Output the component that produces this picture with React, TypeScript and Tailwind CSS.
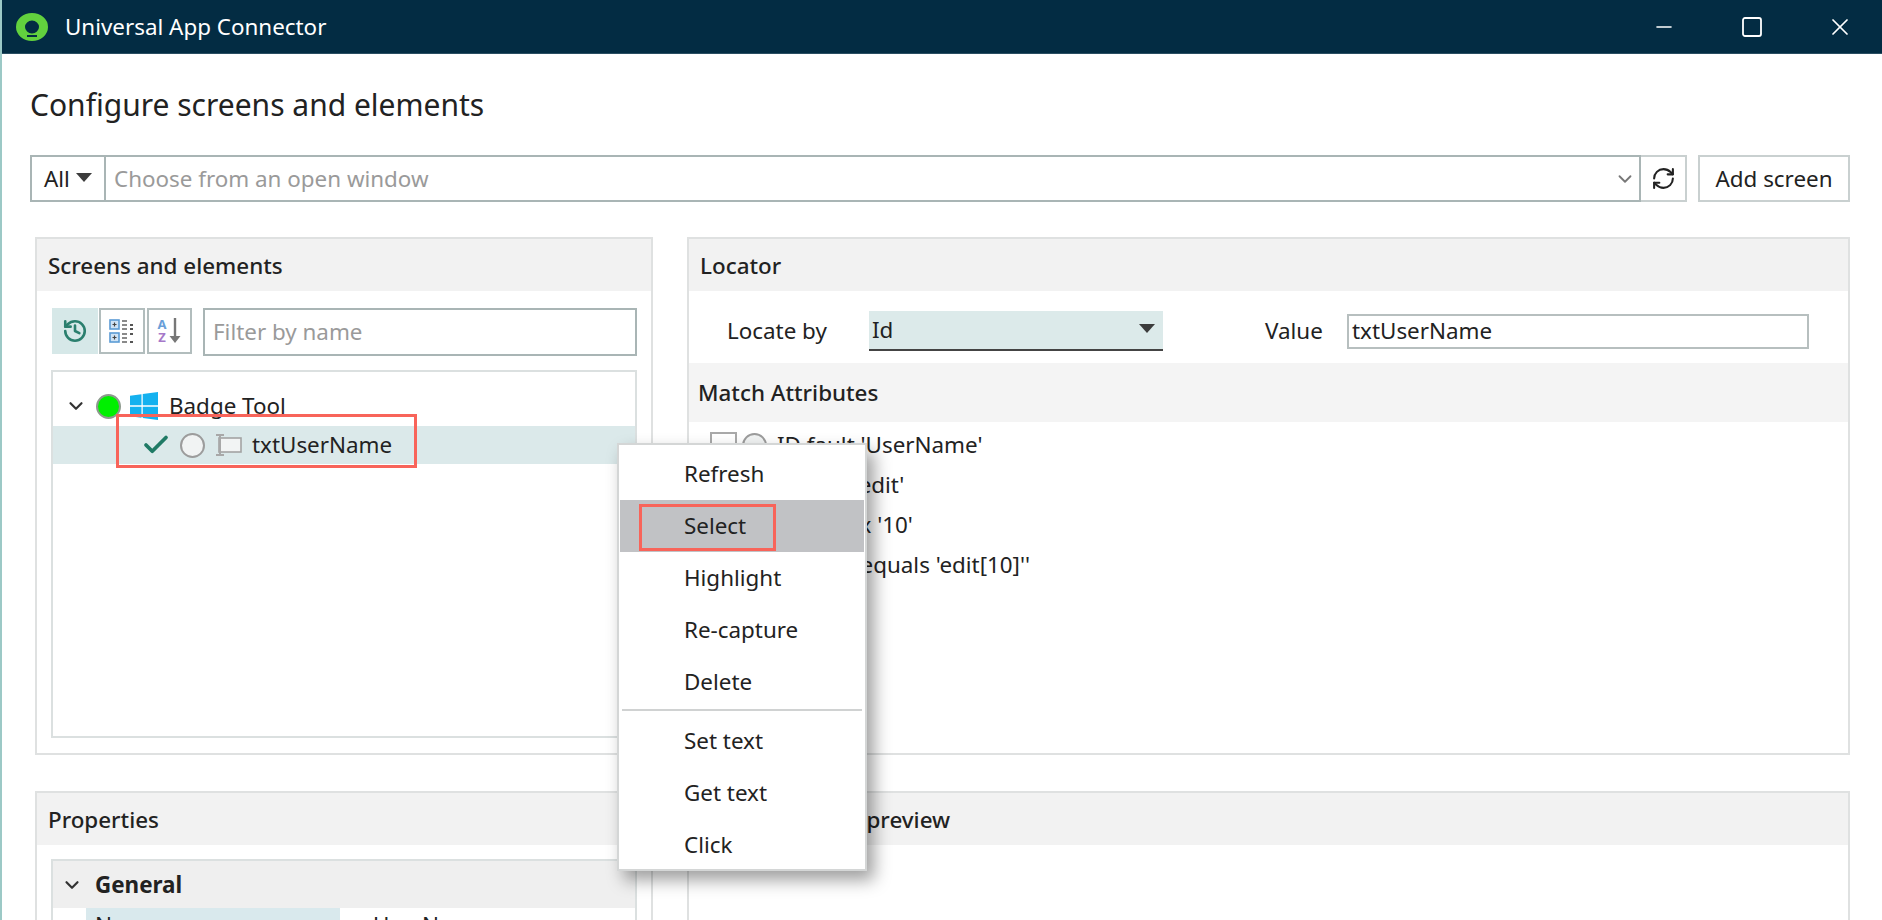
import React from "react";
import { ChevronDown, Check, History, RefreshCw, Minus, X, Square } from "lucide-react";
import { FaWindows } from "react-icons/fa";

function Logo() {
  return (
    <svg width="32" height="28" viewBox="0 0 32 28">
      <path
        fillRule="evenodd"
        d="M0 14a16 14 0 1 0 32 0a16 14 0 1 0 -32 0zM9 14a7 6.5 0 1 0 14 0a7 6.5 0 1 0 -14 0z"
        fill="#62d13e"
      />
      <rect x="11" y="22" width="10" height="2" fill="#032c43" />
    </svg>
  );
}

function ExpandIcon() {
  return (
    <svg width="26" height="26" viewBox="0 0 26 26">
      <rect x="1" y="2" width="9" height="9" fill="#cfe3f5" stroke="#5b9bd5" strokeWidth="1.6" />
      <rect x="1" y="15" width="9" height="9" fill="#cfe3f5" stroke="#5b9bd5" strokeWidth="1.6" />
      <path d="M3.5 6.5h4M5.5 4.5v4M3.5 19.5h4M5.5 17.5v4" stroke="#444" strokeWidth="1.2" />
      <path d="M13 3h5M13 7h5M13 11h5M13 16h5M13 20h5M13 24h5" stroke="#8a8a8a" strokeWidth="2.2" />
      <path d="M21 7h3M21 11h3M21 16h3M21 24h3" stroke="#555" strokeWidth="2.2" />
    </svg>
  );
}

function SortIcon() {
  return (
    <span className="flex items-center gap-[1px]">
      <span className="flex flex-col items-center text-[13px] leading-[13px] font-bold">
        <span className="text-[#6a9fd8]">A</span>
        <span className="text-[#a678c9]">Z</span>
      </span>
      <svg width="14" height="28" viewBox="0 0 14 28">
        <path d="M7 1v20" stroke="#777" strokeWidth="2.4" />
        <path d="M1.5 19h11L7 26z" fill="#777" />
      </svg>
    </span>
  );
}

function ElementIcon() {
  return (
    <svg width="28" height="24" viewBox="0 0 28 24">
      <rect x="5" y="5" width="22" height="14" fill="#f2f4f4" stroke="#a3a3a3" strokeWidth="1.6" />
      <path d="M6 2v20M2 2h8M2 22h8" stroke="#a8a8a8" strokeWidth="2" />
    </svg>
  );
}

function Caret({ className }: { className: string }) {
  return (
    <svg className={className} width="16" height="9" viewBox="0 0 16 9">
      <path d="M0 0h16L8 9z" fill="#3c3c3c" />
    </svg>
  );
}

function Radio() {
  return <span className="block h-[25px] w-[25px] shrink-0 rounded-full border-2 border-[#9c9c9c] bg-[#f1f3f3]" />;
}

function Panel({ title, className, children }: { title: string; className?: string; children?: React.ReactNode }) {
  return (
    <section className={`flex flex-col border-2 border-[#dfe1e1] ${className ?? ""}`}>
      <header className="flex h-[52px] shrink-0 items-center bg-[#f2f2f2] pl-[11px] pt-[2px] font-medium">{title}</header>
      {children}
    </section>
  );
}

function AttrRow({ text }: { text: string }) {
  return (
    <div className="flex h-[40px] items-center">
      <span className="h-[26px] w-[27px] shrink-0 border-2 border-[#a9a9a9]" />
      <span className="ml-[5px]"><Radio /></span>
      <span className="ml-[10px] whitespace-nowrap">{text}</span>
    </div>
  );
}

const menuTop = ["Refresh", "Select", "Highlight", "Re-capture", "Delete"];
const menuBottom = ["Set text", "Get text", "Click"];

function MenuItem({ label }: { label: string }) {
  const active = label === "Select";
  return (
    <div className={`flex h-[52px] items-center pl-[64px] ${active ? "bg-[#c1c2c5]" : ""}`}>
      <span>{label}</span>
    </div>
  );
}

export default function App() {
  return (
    <div className="relative h-[920px] w-[1882px] overflow-hidden border-l-2 border-[#9cc9c6] bg-white text-[22.4px] leading-[28px] text-[#222] font-['Noto_Sans',sans-serif]">
      <div className="-ml-[2px] flex h-[54px] items-center border-b border-[#2a4e62] bg-[#032c43] pl-[16px] text-white">
        <Logo />
        <span className="ml-[17px] whitespace-nowrap">Universal App Connector</span>
        <div className="ml-auto flex items-center gap-[68px] pr-[32px]">
          <Minus size={24} strokeWidth={1.6} className="-mx-[2px]" />
          <Square size={24} strokeWidth={1.8} className="-mx-[2px]" />
          <X size={28} strokeWidth={1.5} className="-mx-[4px]" />
        </div>
      </div>

      <div className="pl-[28px] pr-[32px]">
        <h1 className="mt-[31px] h-[40px] text-[30px] leading-[40px] font-normal">Configure screens and elements</h1>

        <div className="mt-[30px] flex h-[47px]">
          <div className="flex w-[76px] items-center border-2 border-[#a9b5b5] pl-[12px]">
            <span>All</span>
            <Caret className="ml-[6px] mb-[2px]" />
          </div>
          <div className="-ml-[2px] flex flex-1 items-center border-2 border-[#a9b5b5] pl-[8px] pr-[3px] text-[#9a9a9a]">
            <span>Choose from an open window</span>
            <ChevronDown size={22} strokeWidth={2} className="ml-auto text-[#777]" />
          </div>
          <div className="flex w-[46px] items-center justify-center border-2 border-l-0 border-[#c9d0d0]">
            <RefreshCw size={25} strokeWidth={2} className="text-[#222]" />
          </div>
          <div className="ml-[11px] flex w-[152px] items-center justify-center border-2 border-[#c9d0d0]">Add screen</div>
        </div>

        <div className="mt-[35px] ml-[5px] grid grid-cols-[618px_1163px] grid-rows-[518px_200px] gap-x-[34px] gap-y-[36px]">
          <Panel title="Screens and elements">
            <div className="mt-[17px] flex pl-[15px] pr-[14px]">
              <div className="flex h-[46px] w-[46px] items-center justify-center bg-[#d6e8e8]">
                <History size={26} strokeWidth={2.4} className="text-[#2b7f6e]" />
              </div>
              <div className="ml-[1px] flex h-[46px] w-[46px] items-center justify-center border-2 border-[#b2bdbd]">
                <ExpandIcon />
              </div>
              <div className="ml-[2px] flex h-[46px] w-[45px] items-center justify-center border-2 border-[#b2bdbd]">
                <SortIcon />
              </div>
              <div className="ml-[11px] flex h-[48px] flex-1 items-center border-2 border-[#a9b5b5] pl-[8px] text-[#9a9a9a]">Filter by name</div>
            </div>
            <div className="mx-[14px] mt-[14px] h-[368px] border-2 border-[#dbe0e0] pt-[14px]">
              <div className="flex h-[40px] items-center pl-[12px]">
                <ChevronDown size={22} strokeWidth={2.4} className="text-[#333]" />
                <span className="ml-[9px] block h-[25px] w-[25px] shrink-0 rounded-full border-2 border-[#8e9a8e] bg-[#00f000]" />
                <FaWindows size={32} className="ml-[7px] text-[#14b1ef]" />
                <span className="ml-[9px]">Badge Tool</span>
              </div>
              <div className="flex h-[38px] items-center bg-[#dbe9ea] pl-[88px]">
                <Check size={30} strokeWidth={3} className="text-[#1f7a65]" />
                <span className="ml-[9px]"><Radio /></span>
                <span className="ml-[9px]"><ElementIcon /></span>
                <span className="ml-[10px]">txtUserName</span>
              </div>
            </div>
          </Panel>

          <Panel title="Locator">
            <div className="flex h-[72px] shrink-0 items-center pl-[38px] pt-[8px]">
              <span className="w-[142px]">Locate by</span>
              <div className="relative flex h-[40px] w-[294px] items-center border-b-2 border-[#444] bg-[#dceaea] pl-[3px]">
                <span>Id</span>
                <Caret className="ml-auto mr-[8px] mb-[4px]" />
              </div>
              <span className="ml-[102px] w-[82px]">Value</span>
              <div className="flex h-[35px] w-[462px] items-center border-2 border-[#b7bfbf] pl-[3px]">txtUserName</div>
            </div>
            <div className="flex h-[59px] shrink-0 items-center bg-[#f4f4f4] pl-[9px] font-medium">Match Attributes</div>
            <div className="mt-[3px] pl-[21px]">
              <AttrRow text="ID fault 'UserName'" />
              <AttrRow text="Type is 'edit'" />
              <AttrRow text="Tabindex '10'" />
              <AttrRow text="Control equals 'edit[10]''" />
            </div>
          </Panel>

          <Panel title="Properties">
            <div className="mx-[14px] mt-[14px] border-2 border-[#dbe0e0]">
              <div className="flex h-[47px] items-center bg-[#efefef] pl-[8px]">
                <ChevronDown size={22} strokeWidth={2.4} className="text-[#333]" />
                <span className="ml-[12px] font-bold">General</span>
              </div>
              <div className="flex h-[40px] pl-[33px]">
                <div className="w-[254px] bg-[#d9e9ed] pl-[9px] pt-[3px]">Name</div>
                <div className="ml-[4px] pl-[29px] pt-[3px]">UserName</div>
              </div>
            </div>
          </Panel>

          <Panel title="Element image preview" />
        </div>
      </div>

      <div className="absolute left-[615px] top-[443px] h-[428px] w-[250px] border-2 border-[#d4d6d6] bg-white shadow-[7px_9px_16px_rgba(0,0,0,0.38)]">
        <div className="px-[1px] pt-[3px]">
          {menuTop.map((m) => (
            <MenuItem key={m} label={m} />
          ))}
          <div className="mx-[2px] mt-[1px] h-[2px] bg-[#d0d2d2]" />
          <div className="mt-[4px]">
            {menuBottom.map((m) => (
              <MenuItem key={m} label={m} />
            ))}
          </div>
        </div>
      </div>

      <div className="absolute left-[114px] top-[414px] h-[54px] w-[301px] border-[3px] border-[#f8645a]" />
      <div className="absolute left-[637px] top-[504px] h-[47px] w-[137px] border-[3px] border-[#f8645a]" />
    </div>
  );
}
